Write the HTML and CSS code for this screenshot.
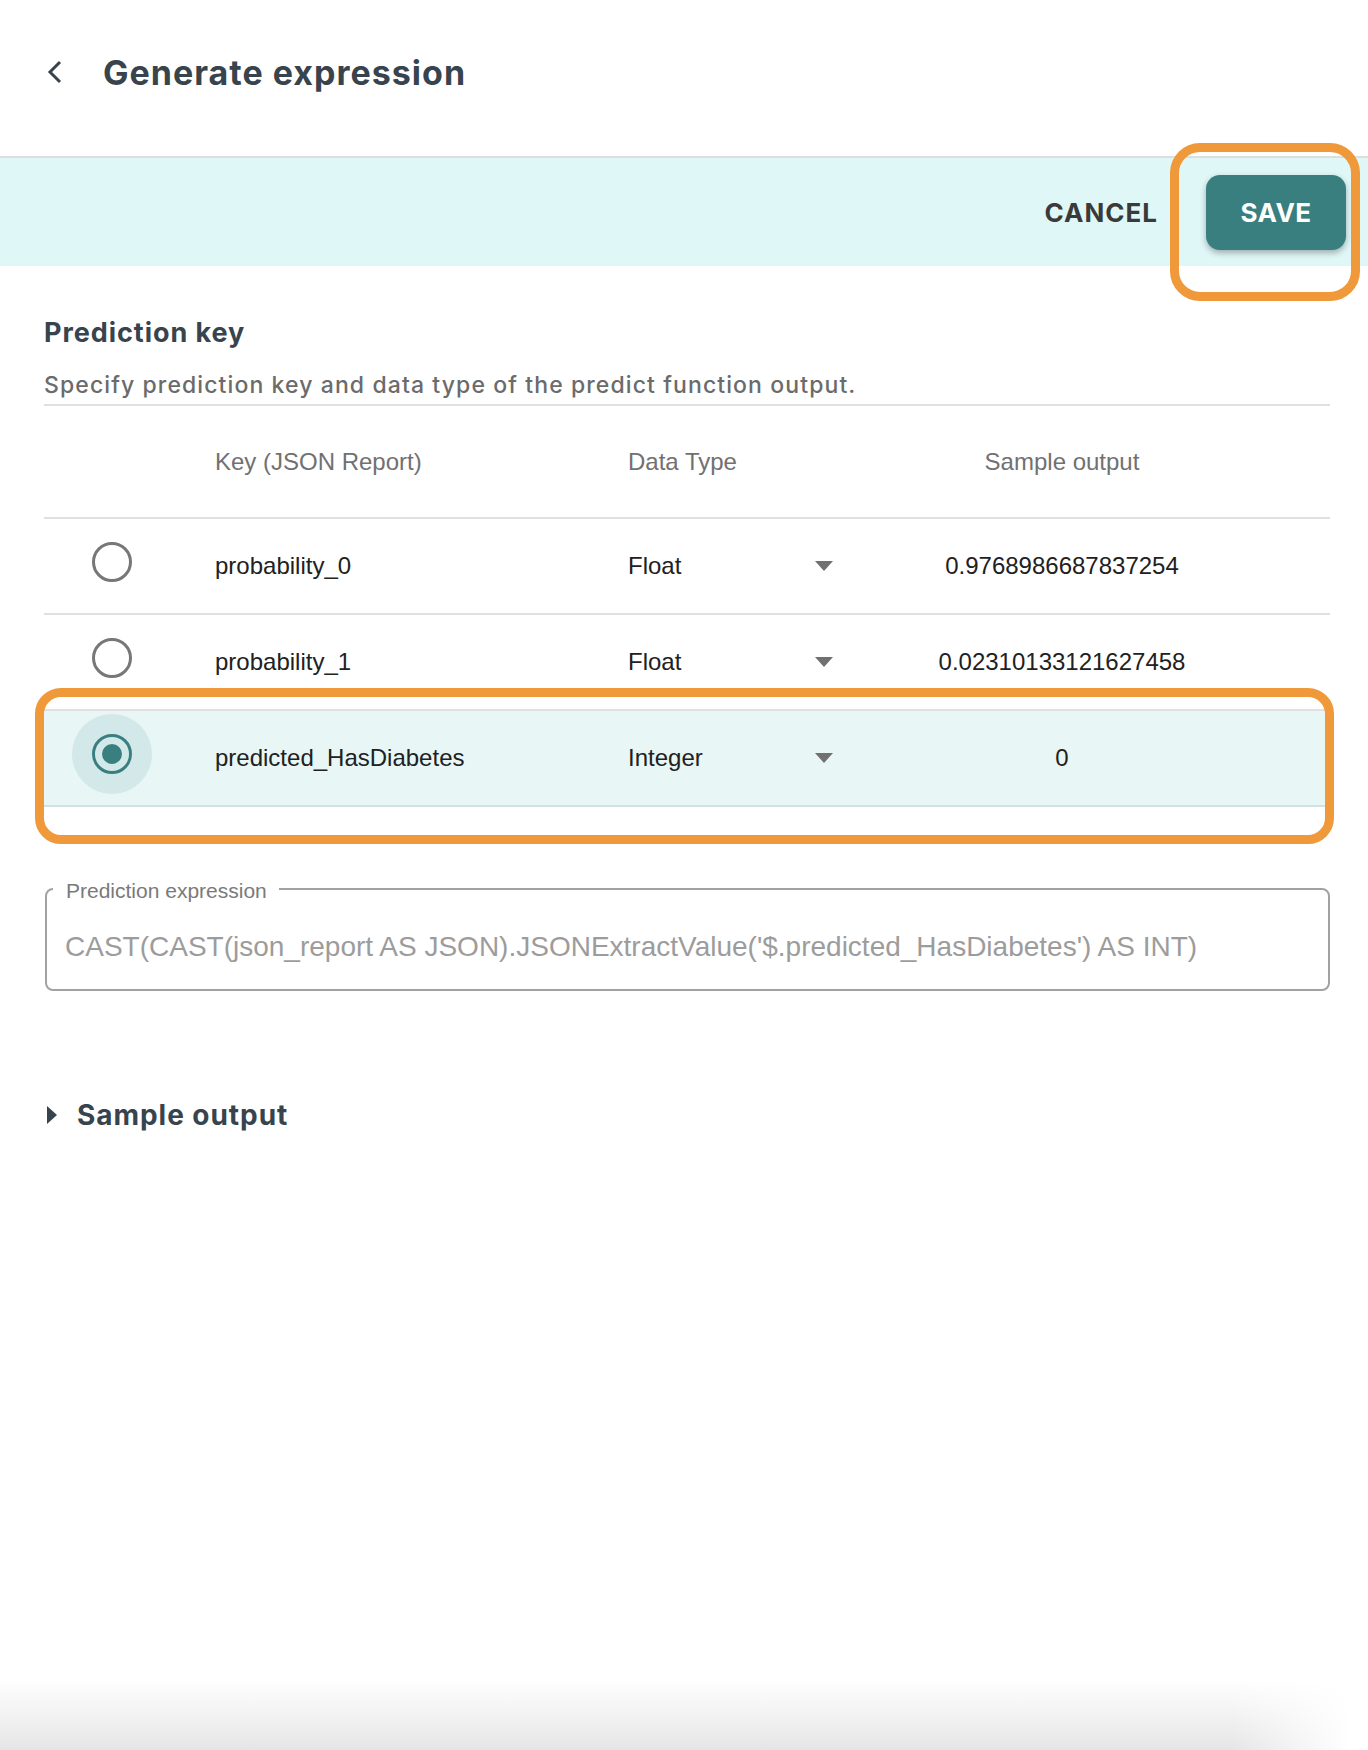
FILE: index.html
```html
<!DOCTYPE html>
<html lang="en">
<head>
<meta charset="utf-8">
<title>Generate expression</title>
<link rel="stylesheet" href="styles.css">
</head>
<body>
<header class="topbar">
  <button class="back" aria-label="Back">
    <svg width="16" height="24" viewBox="0 0 16 24"><polyline points="13,2 3,12 13,22" fill="none" stroke="#38444d" stroke-width="3" stroke-linejoin="miter"/></svg>
  </button>
  <h1 class="title">Generate expression</h1>
</header>
<div class="actionbar">
  <button class="btn-text">CANCEL</button>
  <button class="btn-save annotated annotated-save">SAVE</button>
</div>
<main class="content">
  <h2 class="section-title">Prediction key</h2>
  <p class="section-sub">Specify prediction key and data type of the predict function output.</p>
  <div class="table">
    <div class="row head">
      <div></div>
      <div class="cell">Key (JSON Report)</div>
      <div class="cell">Data Type</div>
      <div class="cell center">Sample output</div>
      <div></div>
    </div>
    <div class="row">
      <div class="radio-wrap"><span class="radio"></span></div>
      <div class="cell">probability_0</div>
      <div class="cell"><div class="select"><span>Float</span><svg width="18" height="10" viewBox="0 0 18 10"><polygon points="0,0 18,0 9,10" fill="#707070"/></svg></div></div>
      <div class="cell center">0.9768986687837254</div>
      <div></div>
    </div>
    <div class="row">
      <div class="radio-wrap"><span class="radio"></span></div>
      <div class="cell">probability_1</div>
      <div class="cell"><div class="select"><span>Float</span><svg width="18" height="10" viewBox="0 0 18 10"><polygon points="0,0 18,0 9,10" fill="#707070"/></svg></div></div>
      <div class="cell center">0.02310133121627458</div>
      <div></div>
    </div>
    <div class="row selected annotated annotated-row">
      <div class="radio-wrap checked"><span class="radio"><span class="dot"></span></span></div>
      <div class="cell">predicted_HasDiabetes</div>
      <div class="cell"><div class="select"><span>Integer</span><svg width="18" height="10" viewBox="0 0 18 10"><polygon points="0,0 18,0 9,10" fill="#707070"/></svg></div></div>
      <div class="cell center">0</div>
      <div></div>
    </div>
  </div>
  <fieldset class="expr">
    <legend>Prediction expression</legend>
    <div class="expr-value">CAST(CAST(json_report AS JSON).JSONExtractValue('$.predicted_HasDiabetes') AS INT)</div>
  </fieldset>
  <div class="expander">
    <svg width="10" height="18" viewBox="0 0 10 18"><polygon points="0,0 10,9 0,18" fill="#38444d"/></svg>
    <span>Sample output</span>
  </div>
</main>
</body>
</html>
```
FILE: styles.css
```css
html {
  min-height: 1750px;
  background:
    linear-gradient(to right, rgba(255,255,255,0) 1230px, #ffffff 1350px) left bottom / 100% 70px no-repeat,
    linear-gradient(to bottom, #ffffff, #e5e5e5) left bottom / 100% 70px no-repeat,
    #ffffff;
}
body {
  margin: 0;
  font-family: "Liberation Sans", Arial, sans-serif;
  color: #212121;
}
button {
  font: inherit;
  border: 0;
  background: none;
  padding: 0;
  cursor: pointer;
}

.topbar {
  height: 144px;
  padding-bottom: 12px;
  border-bottom: 2px solid #dedede;
  display: flex;
  align-items: center;
  padding-left: 47px;
  box-sizing: content-box;
}
.back {
  width: 16px;
  height: 24px;
  display: flex;
}
.title {
  margin: 0 0 0 40px;
  font-family: Inter, "Noto Sans", sans-serif;
  font-weight: 700;
  font-size: 34px;
  letter-spacing: 1px;
  color: #38444d;
}

.actionbar {
  height: 108px;
  background: #e0f7f8;
  display: flex;
  align-items: center;
  justify-content: flex-end;
  gap: 48px;
  padding-right: 22px;
}
.btn-text {
  font-family: Inter, "Noto Sans", sans-serif;
  font-weight: 700;
  font-size: 26px;
  letter-spacing: 1px;
  color: #3a3a3a;
}
.btn-save {
  width: 140px;
  height: 75px;
  border-radius: 14px;
  background: #3a7f80;
  color: #ffffff;
  font-family: Inter, "Noto Sans", sans-serif;
  font-weight: 700;
  font-size: 26px;
  letter-spacing: 0.5px;
  box-shadow: 0 3px 6px rgba(0,0,0,0.3);
}

.annotated { position: relative; }
.annotated::after {
  content: "";
  position: absolute;
  border: 9px solid #f0993a;
  border-radius: 30px;
  pointer-events: none;
}
.annotated-save::after { top: -32px; bottom: -51px; left: -36px; right: -14px; }
.annotated-row::after { top: -23px; bottom: -39px; left: -9px; right: -4px; border-radius: 26px; }

.content {
  padding: 0 38px 0 44px;
}
.section-title {
  margin: 49px 0 0;
  font-family: Inter, "Noto Sans", sans-serif;
  font-weight: 700;
  font-size: 27px;
  line-height: 36px;
  letter-spacing: 0.95px;
  color: #38444d;
}
.section-sub {
  margin: 19px 0 0;
  padding-bottom: 3px;
  border-bottom: 2px solid #e0e0e0;
  font-family: Inter, "Noto Sans", sans-serif;
  font-weight: 500;
  font-size: 23px;
  line-height: 31px;
  letter-spacing: 1.1px;
  color: #6b6b6b;
}

.row {
  display: grid;
  grid-template-columns: 171px 413px 230px 408px 1fr;
  align-items: center;
  height: 94px;
  border-bottom: 2px solid #e0e0e0;
  font-size: 24px;
}
.row.head {
  height: 111px;
  color: #717171;
}
.row.selected {
  background: #e8f6f6;
  border-bottom-color: #d3e1e2;
}
.center { text-align: center; }
.select {
  width: 205px;
  display: flex;
  align-items: center;
  justify-content: space-between;
}
.radio-wrap {
  width: 80px;
  height: 80px;
  margin-left: 28px;
  margin-bottom: 8px;
  border-radius: 50%;
  display: flex;
  align-items: center;
  justify-content: center;
}
.radio {
  width: 40px;
  height: 40px;
  box-sizing: border-box;
  border: 3px solid #777777;
  border-radius: 50%;
  display: flex;
  align-items: center;
  justify-content: center;
}
.radio-wrap.checked { background: #d3e8e9; }
.radio-wrap.checked .radio { border-color: #3a7f80; }
.dot {
  width: 20px;
  height: 20px;
  border-radius: 50%;
  background: #3a7f80;
}

.expr {
  margin: 68px 0 0 1px;
  padding: 28px 18px 26px;
  border: 2px solid #a2a2a2;
  border-radius: 8px;
}
.expr legend {
  margin-left: -12px;
  padding: 4px 12px 0 13px;
  font-size: 21px;
  line-height: 24px;
  color: #7a7a7a;
}
.expr-value {
  font-size: 28px;
  line-height: 32px;
  color: #9c9c9c;
  white-space: nowrap;
}

.expander {
  margin-top: 104px;
  display: flex;
  align-items: center;
  gap: 20px;
  padding-left: 3px;
  height: 40px;
}
.expander span {
  font-family: Inter, "Noto Sans", sans-serif;
  font-weight: 700;
  font-size: 28px;
  letter-spacing: 0.95px;
  color: #38444d;
}
```
